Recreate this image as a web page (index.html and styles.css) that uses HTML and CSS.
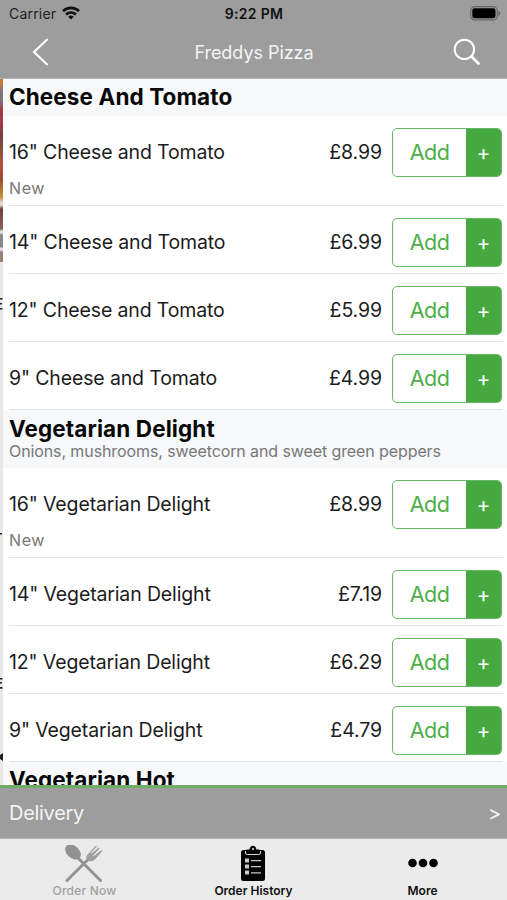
FILE: index.html
```
<!DOCTYPE html>
<html lang="en">
<head>
<meta charset="utf-8">
<title>Freddys Pizza</title>
<link rel="stylesheet" href="styles.css">
</head>
<body>
<div class="app">
  <header class="top">
    <div class="status">
      <div class="carrier"><span>Carrier</span>
        <svg width="18" height="14" viewBox="0 0 18 14"><g fill="none" stroke="#111" stroke-width="2.6"><path d="M1 5.2a11.3 11.3 0 0 1 16 0"/><path d="M4 8.5a7.2 7.2 0 0 1 10 0"/></g><path d="M9 13.6 6.2 10.8a4 4 0 0 1 5.6 0z" fill="#111"/></svg>
      </div>
      <div class="time">9:22 PM</div>
      <svg class="battery" width="31" height="15" viewBox="0 0 31 15"><rect x=".7" y=".7" width="26.6" height="13.2" rx="4" fill="none" stroke="#666" stroke-width="1.2"/><rect x="2.3" y="2.3" width="23.2" height="10" rx="2.4" fill="#000"/><path d="M28.4 5v5q2-.8 2-2.5t-2-2.5z" fill="#666"/></svg>
    </div>
    <nav class="bar">
      <svg class="back" width="18" height="30" viewBox="0 0 18 30"><path d="M15.700 2 2 15l13.700 13" fill="none" stroke="#fff" stroke-width="2.200"/></svg>
      <div class="title">Freddys Pizza</div>
      <svg class="search" width="28" height="28" viewBox="0 0 28 28"><g fill="none" stroke="#fff"><circle cx="11.400" cy="11.400" r="9.700" stroke-width="2"/><path d="m18.500 18.500 7 7" stroke-width="2.800" stroke-linecap="round"/></g></svg>
    </nav>
  </header>
  <main class="content">
    <aside class="peek">
      <div class="photo"></div>
      <svg width="3" height="523" viewBox="0 0 3 523"><g fill="#222"><path d="M0 36h2.500v1.600H0zM0 41h2v1.600H0zM0 46h2.500v1.600H0zM0 271h2v1.500H0zM0 416h2.500v1.500H0zM0 420h2v1.500H0zM0 425h2.500v1.800H0z"/><path d="M3 491v8l-3-2v-4z"/></g></svg>
    </aside>
    <div class="menu">
      <section>
        <div class="head"><h2>Cheese And Tomato</h2></div>
        <div class="row tall"><div class="name">16" Cheese and Tomato<small>New</small></div><div class="price">£8.99</div><div class="add"><span>Add</span><b>+</b></div></div>
        <div class="row"><div class="name">14" Cheese and Tomato</div><div class="price">£6.99</div><div class="add"><span>Add</span><b>+</b></div></div>
        <div class="row"><div class="name">12" Cheese and Tomato</div><div class="price">£5.99</div><div class="add"><span>Add</span><b>+</b></div></div>
        <div class="row"><div class="name">9" Cheese and Tomato</div><div class="price">£4.99</div><div class="add"><span>Add</span><b>+</b></div></div>
      </section>
      <section>
        <div class="head described"><h2>Vegetarian Delight</h2><p>Onions, mushrooms, sweetcorn and sweet green peppers</p></div>
        <div class="row tall"><div class="name">16" Vegetarian Delight<small>New</small></div><div class="price">£8.99</div><div class="add"><span>Add</span><b>+</b></div></div>
        <div class="row"><div class="name">14" Vegetarian Delight</div><div class="price">£7.19</div><div class="add"><span>Add</span><b>+</b></div></div>
        <div class="row"><div class="name">12" Vegetarian Delight</div><div class="price">£6.29</div><div class="add"><span>Add</span><b>+</b></div></div>
        <div class="row"><div class="name">9" Vegetarian Delight</div><div class="price">£4.79</div><div class="add"><span>Add</span><b>+</b></div></div>
      </section>
      <section>
        <div class="head"><h2>Vegetarian Hot</h2></div>
      </section>
    </div>
  </main>
  <div class="delivery"><span>Delivery</span><span class="more">&gt;</span></div>
  <footer class="tabs">
    <div class="tab off">
      <svg width="40" height="38" viewBox="0 0 40 38"><g stroke="#929292" stroke-width="3" stroke-linecap="round"><path d="m13 12 23.500 23.500M26 12.500 3 35.500"/></g><ellipse cx="9" cy="7" rx="9" ry="6.200" transform="rotate(42 9 7)" fill="#929292"/><path d="m24 9 8-8.500 1 .7-6 6.800.6.500 7.100-6 .9.900-6.300 7.100.6.500L37.500 5l1 1-7.500 8.500c-3 2.500-5.700 2-7.500.5-2-2-1.500-4 .5-6z" fill="#a0a0a0"/></svg>
      <span>Order Now</span>
    </div>
    <div class="tab on">
      <svg width="24" height="37" viewBox="0 0 24 37"><rect y="5" width="24" height="31" rx="2.500" fill="#000"/><path d="M4.500 9.500V6q0-1.500 2-1.500h2Q9 .8 12 .8t3.500 3.700h2q2 0 2 1.500v3.500z" fill="#000"/><path d="M4.500 6v2q0 1.500 2 1.500h11q2 0 2-1.500V6" fill="none" stroke="#ddd" stroke-width="1"/><circle cx="12" cy="4" r="1" fill="#ebebeb"/><g fill="#c9c9c9"><path d="M4 13.500h4v4H4zM4 19.500h4v4H4zM4 25.500h4v4H4z"/><path d="M10 15h10v1.200H10zM10 21h10v1.200H10zM10 27.200h10v1.200H10z"/></g></svg>
      <span>Order History</span>
    </div>
    <div class="tab">
      <svg width="30" height="10" viewBox="0 0 30 10"><circle cx="4.500" cy="5" r="4.300"/><circle cx="15" cy="5" r="4.300"/><circle cx="25.500" cy="5" r="4.300"/></svg>
      <span>More</span>
    </div>
  </footer>
</div>
</body>
</html>
```
FILE: styles.css
```
* { box-sizing: border-box; }
body { margin: 0; font-family: Inter, "Liberation Sans", sans-serif; color: #1c1c1c; }
svg { display: block; }
.app { width: 507px; height: 900px; display: grid; grid-template-rows: 79px 706px 54px 61px; overflow: hidden; background: #fff; }
.top { background: #9d9d9d; border-bottom: 1px solid #b5b5b5; }
.status { display: grid; grid-template-columns: 1fr auto 1fr; align-items: center; height: 27px; padding: 0 6px 0 9px; font-size: 14px; }
.carrier { display: flex; align-items: center; gap: 6px; color: #222; letter-spacing: .2px; }
.carrier svg { margin-top: -2px; }
.time { font-weight: 600; color: #111; letter-spacing: .3px; margin-left: -2px; }
.battery { justify-self: end; }
.bar { display: grid; grid-template-columns: 1fr auto 1fr; align-items: center; height: 50px; padding: 0 26px 0 32px; color: #f4f4f4; }
.title { font-size: 18px; letter-spacing: -.05px; margin-left: -5px; }
.search { justify-self: end; }
.content { display: grid; grid-template-columns: 3px 1fr; overflow: hidden; }
.peek { background: #e8e8e8; overflow: hidden; }
.photo { height: 183px; background: linear-gradient(#c6783f 0 5px, #7c7280 12px 22px, #a73a48 30px 44px, #744040 56px, #87503f 70px, #b65236 85px, #9a4b30 100px, #c79337 118px, #ddd 124px 126px, #704238 130px, #8b6256 150px, #ddd 152px 154px, #878b88 156px 168px, #ddd 169px 171px, #9a8078 173px); }
.head { height: 37px; padding: 4px 0 0 6px; background: #f6f8fa; }
.head.described { height: 58px; padding-top: 5px; }
h2 { margin: 0; font-size: 22.500px; line-height: 28px; font-weight: 700; letter-spacing: .1px; color: #080808; white-space: nowrap; }
p { margin: -4px 0 0; font-size: 16px; line-height: 24px; letter-spacing: -.1px; color: #777; white-space: nowrap; }
.row { display: flex; height: 68px; margin: 0 4px 0 6px; padding: 12px 1px 0 0; border-bottom: 1px solid #e4e4e4; line-height: 48px; }
.row.tall { height: 90px; }
.name { flex: 1; font-size: 19.500px; letter-spacing: -.14px; white-space: nowrap; }
.name small { display: block; font-size: 16px; line-height: 24px; letter-spacing: .6px; color: #777; }
.price { font-size: 19.500px; letter-spacing: -.1px; margin-right: 10px; }
.add { display: grid; grid-template-columns: 1fr 35px; width: 110px; height: 49px; border: 1.500px solid #68b966; border-radius: 5px; overflow: hidden; text-align: center; color: #4bae48; background: #fff; }
.add span { font-size: 21.500px; letter-spacing: -.5px; line-height: 47px; }
.add b { font-size: 21px; font-weight: 400; color: #fff; background: #45a93f; line-height: 47px; }
.delivery { display: flex; justify-content: space-between; align-items: center; padding: 0 6px 0 9px; border-top: 3px solid #6fad66; border-bottom: 1px solid #b5b5b5; background: #9d9d9d; color: #f4f4f4; font-size: 20px; letter-spacing: -.3px; }
.tabs { display: grid; grid-template-columns: repeat(3, 1fr); background: #ebebeb; }
.tab { display: grid; grid-template-rows: 45px 14px; align-items: center; justify-items: center; align-content: start; font-size: 12px; font-weight: 600; line-height: 14px; color: #111; }
.tab svg { margin-top: 3px; }
.tab.on svg { margin-left: -1px; }
.tab.off { color: #a0a0a0; font-weight: 500; letter-spacing: .2px; }
.tab.off svg { margin-top: 4px; margin-left: -1px; }
```
